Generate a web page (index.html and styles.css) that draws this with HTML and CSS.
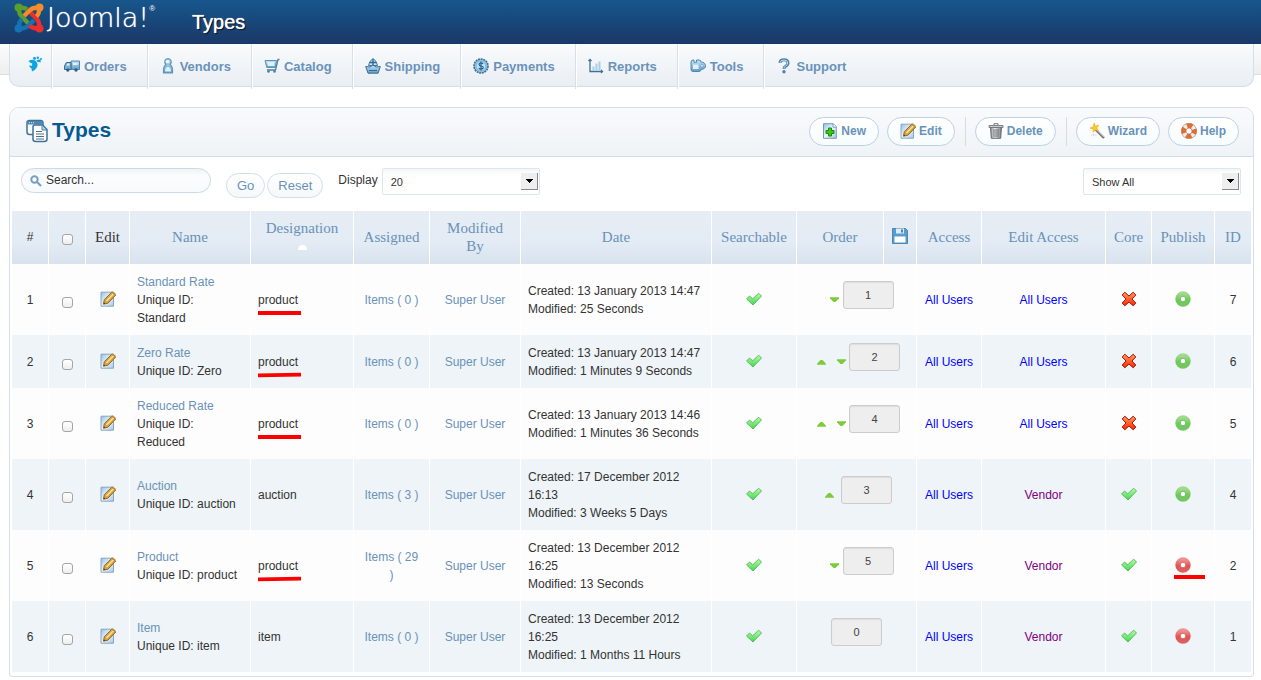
FILE: index.html
```html
<!DOCTYPE html>
<html lang="en">
<head>
<meta charset="utf-8">
<title>Types</title>
<link rel="stylesheet" href="styles.css">
</head>
<body>
<svg class="sprite" aria-hidden="true">
  <defs>
    <linearGradient id="g-blue" x1="0" y1="0" x2="0" y2="1"><stop offset="0" stop-color="#c5e4f5"/><stop offset="1" stop-color="#5f9cc5"/></linearGradient>
    <linearGradient id="g-check" x1="0" y1="0" x2="0" y2="1"><stop offset="0" stop-color="#b4ffa0"/><stop offset="1" stop-color="#42d653"/></linearGradient>
    <linearGradient id="g-cross" x1="0" y1="0" x2="0" y2="1"><stop offset="0" stop-color="#ff9a5c"/><stop offset="1" stop-color="#ff2600"/></linearGradient>
    <linearGradient id="g-on" x1="0" y1="0" x2="0" y2="1"><stop offset="0" stop-color="#a0d98f"/><stop offset=".6" stop-color="#6ccb55"/><stop offset="1" stop-color="#74c663"/></linearGradient>
    <linearGradient id="g-off" x1="0" y1="0" x2="0" y2="1"><stop offset="0" stop-color="#f09090"/><stop offset=".6" stop-color="#e45050"/><stop offset="1" stop-color="#de5f5f"/></linearGradient>
    <linearGradient id="g-page" x1="0" y1="0" x2="1" y2="1"><stop offset="0" stop-color="#8fc0ec"/><stop offset=".5" stop-color="#eef6ff"/><stop offset="1" stop-color="#a6c5e8"/></linearGradient>
    <linearGradient id="g-bin" x1="0" y1="0" x2="1" y2="0"><stop offset="0" stop-color="#8a8f94"/><stop offset=".4" stop-color="#eceeef"/><stop offset="1" stop-color="#777c82"/></linearGradient>
  </defs>
  <symbol id="i-joomla" viewBox="0 0 30 30">
    <g fill="none" stroke-width="4.400" stroke-linejoin="round">
      <path d="M5 5 Q4.500 10.500 8 14 L14.500 20.500" stroke="#5a9e2d"/>
      <path d="M5 25 Q4.500 19 8 15.800 M5 25 Q11 26 14.500 22.500 L20 17" stroke="#1472b5"/>
      <path d="M25 25 Q19 26 15.500 22.500 M25 25 Q26 19 22.500 15.500 L16 9" stroke="#ed2f2c"/>
      <path d="M25 5 Q25.500 10.500 22.500 13.500 M25 5 Q19 4 15.500 7.500 L10 13" stroke="#f68b28"/>
      <path d="M5 5 Q10 4 13.200 6.200" stroke="#5a9e2d"/>
    </g>
    <circle cx="4.500" cy="4.500" r="4" fill="#5a9e2d"/><circle cx="25.500" cy="4.500" r="4" fill="#f68b28"/>
    <circle cx="4.500" cy="25.500" r="4" fill="#1472b5"/><circle cx="25.500" cy="25.500" r="4" fill="#ed2f2c"/>
  </symbol>
  <symbol id="i-home" viewBox="0 0 16 16">
    <path fill="#0ca5e2" d="M1.500 5 Q5.500 2.500 8.800 5 Q12 8.500 9.500 12 Q8 14.500 5 15.500 L4.500 12.500 Q2.500 11.500 2 9.500 L5 9.700 L5.300 7.500 Q3 7 1.500 5Z M9.500 4.200 L13.500 3.200 L13.800 6.300 L10.500 6Z"/>
    <circle cx="7.500" cy="2.200" r="1.500" fill="#0ca5e2"/><circle cx="10.800" cy="1.700" r="1.200" fill="#0ca5e2"/><circle cx="14" cy="3" r="1" fill="#0ca5e2"/>
  </symbol>
  <symbol id="i-truck" viewBox="0 0 16 16">
    <path d="M7 3h8.500v8.500H7z" fill="url(#g-blue)" stroke="#5688ae"/><path d="M.5 11.500V8L2.300 4.500H7v7z" fill="#7fb0d2" stroke="#3a6f99"/>
    <path d="M2.500 7.500 3.300 5.500H5.500v2z" fill="#e3f3fb"/><path d="M9 5h4.500v2H9z" fill="#e3f3fb"/>
    <circle cx="3.800" cy="12" r="1.700" fill="#2f5f88"/><circle cx="12" cy="12" r="1.700" fill="#2f5f88"/>
  </symbol>
  <symbol id="i-vendor" viewBox="0 0 16 16">
    <path d="M8 .7a3.300 3.300 0 0 1 2.200 5.700Q12.500 8 12.500 11.500V15H3.500v-3.500Q3.500 8 5.800 6.400A3.300 3.300 0 0 1 8 .7z" fill="url(#g-blue)" stroke="#5f93b8" stroke-width="1.200"/>
    <ellipse cx="7.500" cy="3.500" rx="1.800" ry="1.600" fill="#eef8fd"/><path d="M5 13.500q0-4.500 3-4.500t3 4.500z" fill="#dceffa"/>
  </symbol>
  <symbol id="i-cart" viewBox="0 0 16 16">
    <path d="M1 2.500h11.500l-1.200 7H2.800z" fill="url(#g-blue)" stroke="#5f93b8"/><path d="M15.500 1.500H14L11.500 12H3" fill="none" stroke="#4b80a8" stroke-width="1.300"/>
    <path d="M3 4h7.500v4H3.800z" fill="#dceffa"/><circle cx="4.500" cy="13.500" r="1.300" fill="#4b80a8"/><circle cx="10.500" cy="13.500" r="1.300" fill="#4b80a8"/>
  </symbol>
  <symbol id="i-ship" viewBox="0 0 16 16">
    <path d="M8 .5Q12 3 12.500 7.500H3.500Q4 3 8 .5z" fill="#c6e4f3" stroke="#44779f"/><path d="M8 1v7M5 4.500h6" stroke="#2f658f" stroke-width="1.300"/>
    <path d="M.7 8.500 5 9l3-2 3 2 4.300-.5-2.200 6.700H3z" fill="url(#g-blue)" stroke="#3a6d96"/><path d="M4 12.500h8" stroke="#3a6d96"/>
  </symbol>
  <symbol id="i-coin" viewBox="0 0 16 16">
    <circle cx="8" cy="8" r="7" fill="#8fc4e3" stroke="#3d6f98" stroke-width="1.600" stroke-dasharray="2 .7"/><circle cx="8" cy="8" r="4.800" fill="#bce2f4" stroke="#74abcf" stroke-width=".7"/>
    <path d="M10.200 5.800Q8 4 6.300 5.600 5.500 7.500 8 8q2.800.6 2 2.300Q8 12 5.800 10.300M8 3.500v9" fill="none" stroke="#2c628c" stroke-width="1.200"/>
  </symbol>
  <symbol id="i-chart" viewBox="0 0 16 16">
    <path d="M2 1.500v12h12.500M.5 3 2 1.500 3.500 3m9.500 9 1.500 1.500-1.500 1.500" fill="none" stroke="#3f7298" stroke-width="1.300"/>
    <path d="M4.500 8.500h2v4h-2zM7.500 5.500h2v7h-2zM10.500 3.500h2v9h-2z" fill="#a9cfe7"/>
  </symbol>
  <symbol id="i-tools" viewBox="0 0 16 16">
    <path d="M1 4q0-2 2-2h1v2.200h2.500V2H9q2 0 2 2 4.500.5 4.500 3.800T11 11.500q0 2-2 2H3q-2 0-2-2z" fill="url(#g-blue)" stroke="#5288b0" stroke-linejoin="round"/><path d="M3 6.500h5.500v4.500H3z" fill="#dff1fa"/><circle cx="12" cy="7.800" r="1.300" fill="#fff" stroke="#5288b0" stroke-width=".6"/>
  </symbol>
  <symbol id="i-question" viewBox="0 0 16 16">
    <path d="M4 5Q4 1.700 8 1.700t4 3.300q0 2-2.500 3.300Q8 9 8 11" fill="none" stroke="#4d83ab" stroke-width="3"/><path d="M4 4.800Q4.300 2 8 2t3.700 3q0 1.700-2.200 3Q8 9 8 10.700" fill="none" stroke="#c0dded" stroke-width="1"/><circle cx="8" cy="13.800" r="1.700" fill="#4d83ab"/>
  </symbol>
  <symbol id="i-types" viewBox="0 0 22 24">
    <rect x="1" y="1.500" width="16" height="14" rx="2.500" fill="#fafcfd" stroke="#3d7299" stroke-width="1.500"/><path d="M1.500 2h15v3.500h-15z" fill="#4d86ae"/><path d="M3 3.700h5" stroke="#cfe8f5" stroke-dasharray="1 1"/>
    <path d="M9 6h7.500L21 10.500V20q0 2.500-2.500 2.500H9.500Q7 22.500 7 20V8q0-2 2-2z" fill="#fff" stroke="#3d7299" stroke-width="1.500"/><path d="M16 6v5h5z" fill="#a8d8ef" stroke="#4d86ae"/>
    <path d="M10 12.500h6M10 15h8M10 17.500h8M10 20h8" stroke="#4d6f8a" stroke-width="1.200"/>
  </symbol>
  <symbol id="i-search" viewBox="0 0 12 12"><circle cx="4.500" cy="4.500" r="3.200" fill="none" stroke="#769ec4" stroke-width="2"/><path d="m7 7 4 4" stroke="#769ec4" stroke-width="2.200"/></symbol>
  <symbol id="i-new" viewBox="0 0 16 16">
    <path d="M1.500.7h9.800l3 3v11.600H1.500z" fill="url(#g-page)" stroke="#7899b4"/><path d="M11 .7v3.500h3.300" fill="#fff" stroke="#7899b4"/>
    <path d="M6.500 5h3v2.500H12v3H9.500V13h-3v-2.500H4v-3h2.500z" fill="#3ec813" stroke="#168b08" stroke-linejoin="round"/>
  </symbol>
  <symbol id="i-edit" viewBox="0 0 16 16">
    <path d="M1 1.200h12.500v14H1z" fill="url(#g-page)" stroke="#8aa5bc"/>
    <path d="m3.500 13.200.8-4.500 7.400-7.500 4 2.800-7.800 8.200z" fill="#d9a441" stroke="#8c6728"/><path d="m6.500 10 7-7.200" stroke="#ffe29a" stroke-width="1.300"/><path d="m11.500 1.200 1-1 3.300 2.600-.6 1.400z" fill="#bd8b3d"/><path d="m3.500 13.200.5-1.800 1.200 1z" fill="#333"/>
  </symbol>
  <symbol id="i-bin" viewBox="0 0 16 16">
    <path d="M2.500 4h11l-.8 11.300H3.300z" fill="url(#g-bin)" stroke="#666b70"/><path d="M1 2.500h14v2H1z" fill="#c9cdd0" stroke="#666b70" stroke-width=".8"/><path d="M6 2V.7h4V2M6 6v8M8 6v8M10 6v8" fill="none" stroke="#62676c" stroke-width=".9"/>
  </symbol>
  <symbol id="i-wand" viewBox="0 0 16 16">
    <path d="m6 6 9 9" stroke="#6f6f70" stroke-width="2.400"/><path d="m6.500 5.800 8.500 8.500" stroke="#e0e0de" stroke-width=".9"/><path d="M2 12h6M4.500 10.500v3" stroke="#dcdfe0"/>
    <path d="M5.200 0 6.300 3 9.800 2.200 7.800 5 9.500 7.700 6.200 7 4.200 9.300 4 6.200 1 5 4.200 3.800z" fill="#ffc928" stroke="#e8a010" stroke-width=".5"/>
  </symbol>
  <symbol id="i-help" viewBox="0 0 16 16">
    <circle cx="8" cy="8" r="5.300" fill="none" stroke="#9a6850" stroke-width="5.200"/><circle cx="8" cy="8" r="5.300" fill="none" stroke="#f4eee9" stroke-width="4.200"/><circle cx="8" cy="8" r="5.300" fill="none" stroke="#e26b32" stroke-width="4.600" stroke-dasharray="5.325 3" stroke-dashoffset="2.660"/>
  </symbol>
  <symbol id="i-save" viewBox="0 0 16 16">
    <path d="M.5.500h13l2 2v13H.5z" fill="#5a9dcd" stroke="#4b86b5"/><path d="M4 .5h8v5H4z" fill="#dcecf6"/><path d="M9 1.500h2v3H9z" fill="#4b86b5"/><path d="M2.500 8.500h11v6h-11z" fill="#fff"/>
  </symbol>
  <symbol id="i-check" viewBox="0 0 16 16"><path d="m.6 8 2.900-3 3.200 2.800 6-5.600L15.500 5 7 14z" fill="url(#g-check)" stroke="#55b35a" stroke-width=".9" stroke-linejoin="round"/></symbol>
  <symbol id="i-cross" viewBox="0 0 16 16"><path d="M3.800 1.200 8 5l4.200-3.800L14.800 4 11 8l3.800 4-2.600 2.800L8 11l-4.200 3.800L1.200 12 5 8 1.200 4z" fill="url(#g-cross)" stroke="#a9160b" stroke-linejoin="round"/></symbol>
  <symbol id="i-on" viewBox="0 0 16 16"><circle cx="8" cy="8" r="5.200" fill="none" stroke="url(#g-on)" stroke-width="5"/><circle cx="8" cy="8" r="2.700" fill="#fff" stroke="#55a348" stroke-width=".7"/></symbol>
  <symbol id="i-off" viewBox="0 0 16 16"><circle cx="8" cy="8" r="5.200" fill="none" stroke="url(#g-off)" stroke-width="5"/><circle cx="8" cy="8" r="2.700" fill="#fff" stroke="#c04545" stroke-width=".7"/></symbol>
  <symbol id="i-up" viewBox="0 0 9 6"><path d="M0 5.800V4.800L3.500 1h2L9 4.800v1z" fill="#7ccb3a"/></symbol>
  <symbol id="i-down" viewBox="0 0 9 6"><path d="M0 .2v1L3.500 5h2L9 1.200v-1z" fill="#7ccb3a"/></symbol>
</svg>

<header class="topbar">
  <a class="brand" href="#"><svg class="brand-mark" aria-hidden="true"><use href="#i-joomla"/></svg><span class="brand-name">Joomla!</span><sup class="brand-reg">®</sup></a>
  <span class="topbar-title">Types</span>
</header>

<div class="nav-strip">
  <nav class="nav">
    <a class="nav-item nav-home" href="#" aria-label="Home"><svg class="icon"><use href="#i-home"/></svg></a>
    <a class="nav-item" href="#"><svg class="icon"><use href="#i-truck"/></svg>Orders</a>
    <a class="nav-item" href="#"><svg class="icon"><use href="#i-vendor"/></svg>Vendors</a>
    <a class="nav-item" href="#"><svg class="icon"><use href="#i-cart"/></svg>Catalog</a>
    <a class="nav-item" href="#"><svg class="icon"><use href="#i-ship"/></svg>Shipping</a>
    <a class="nav-item" href="#"><svg class="icon"><use href="#i-coin"/></svg>Payments</a>
    <a class="nav-item" href="#"><svg class="icon"><use href="#i-chart"/></svg>Reports</a>
    <a class="nav-item" href="#"><svg class="icon"><use href="#i-tools"/></svg>Tools</a>
    <a class="nav-item" href="#"><svg class="icon"><use href="#i-question"/></svg>Support</a>
  </nav>
</div>

<main class="panel">
  <div class="panel-head">
    <svg class="panel-icon" aria-hidden="true"><use href="#i-types"/></svg>
    <h1 class="panel-title">Types</h1>
    <div class="toolbar">
      <button class="tool" type="button"><svg class="icon"><use href="#i-new"/></svg>New</button>
      <button class="tool" type="button"><svg class="icon"><use href="#i-edit"/></svg>Edit</button>
      <span class="tool-sep"></span>
      <button class="tool" type="button"><svg class="icon"><use href="#i-bin"/></svg>Delete</button>
      <span class="tool-sep"></span>
      <button class="tool" type="button"><svg class="icon"><use href="#i-wand"/></svg>Wizard</button>
      <button class="tool" type="button"><svg class="icon"><use href="#i-help"/></svg>Help</button>
    </div>
  </div>

  <form class="filters">
    <div class="search"><svg class="search-icon" aria-hidden="true"><use href="#i-search"/></svg><input class="search-input" type="text" aria-label="Search" value="Search..."></div>
    <div class="filter-buttons"><button class="pill" type="button">Go</button><button class="pill" type="button">Reset</button></div>
    <label class="display-label" for="display">Display</label>
    <span class="select"><select class="select-box" id="display"><option>20</option></select></span>
    <span class="select select-end"><select class="select-box" aria-label="Show"><option>Show All</option></select></span>
  </form>

  <table class="grid">
    <colgroup><col class="w37"><col class="w37"><col class="w44"><col class="w121"><col class="w103"><col class="w76"><col class="w91"><col class="w191"><col class="w85"><col class="w87"><col class="w33"><col class="w65"><col class="w124"><col class="w46"><col class="w63"><col class="w37"></colgroup>
    <thead>
      <tr>
        <th class="num">#</th>
        <th><input class="check" type="checkbox" aria-label="Select all"></th>
        <th class="plain">Edit</th>
        <th><a href="#">Name</a></th>
        <th><a href="#">Designation<span class="sort"></span></a></th>
        <th><a href="#">Assigned</a></th>
        <th><a href="#">Modified<br>By</a></th>
        <th><a href="#">Date</a></th>
        <th><a href="#">Searchable</a></th>
        <th><a href="#">Order</a></th>
        <th><a href="#" aria-label="Save order"><svg class="icon"><use href="#i-save"/></svg></a></th>
        <th><a href="#">Access</a></th>
        <th><a href="#">Edit Access</a></th>
        <th><a href="#">Core</a></th>
        <th><a href="#">Publish</a></th>
        <th><a href="#">ID</a></th>
      </tr>
    </thead>
    <tbody>
      <tr>
        <td>1</td>
        <td><input class="check" type="checkbox" aria-label="Select row 1"></td>
        <td><a href="#" aria-label="Edit"><svg class="icon"><use href="#i-edit"/></svg></a></td>
        <td class="left"><a href="#">Standard Rate</a><br>Unique ID:<br>Standard</td>
        <td class="left"><span class="marked">product</span></td>
        <td><a href="#">Items ( 0 )</a></td>
        <td><a href="#">Super User</a></td>
        <td class="left">Created: 13 January 2013 14:47<br>Modified: 25 Seconds</td>
        <td><svg class="icon"><use href="#i-check"/></svg></td>
        <td class="order" colspan="2"><div class="order-row"><a class="move down lone" href="#" aria-label="Move down"><svg class="arrow"><use href="#i-down"/></svg></a><input class="order-input" type="text" aria-label="Order" value="1"></div></td>
        <td><a class="all" href="#">All Users</a></td>
        <td><a class="all" href="#">All Users</a></td>
        <td><svg class="icon"><use href="#i-cross"/></svg></td>
        <td><svg class="icon"><use href="#i-on"/></svg></td>
        <td>7</td>
      </tr>
      <tr>
        <td>2</td>
        <td><input class="check" type="checkbox" aria-label="Select row 2"></td>
        <td><a href="#" aria-label="Edit"><svg class="icon"><use href="#i-edit"/></svg></a></td>
        <td class="left"><a href="#">Zero Rate</a><br>Unique ID: Zero</td>
        <td class="left"><span class="marked tilt">product</span></td>
        <td><a href="#">Items ( 0 )</a></td>
        <td><a href="#">Super User</a></td>
        <td class="left">Created: 13 January 2013 14:47<br>Modified: 1 Minutes 9 Seconds</td>
        <td><svg class="icon"><use href="#i-check"/></svg></td>
        <td class="order" colspan="2"><div class="order-row"><a class="move up" href="#" aria-label="Move up"><svg class="arrow"><use href="#i-up"/></svg></a><a class="move down" href="#" aria-label="Move down"><svg class="arrow"><use href="#i-down"/></svg></a><input class="order-input" type="text" aria-label="Order" value="2"></div></td>
        <td><a class="all" href="#">All Users</a></td>
        <td><a class="all" href="#">All Users</a></td>
        <td><svg class="icon"><use href="#i-cross"/></svg></td>
        <td><svg class="icon"><use href="#i-on"/></svg></td>
        <td>6</td>
      </tr>
      <tr>
        <td>3</td>
        <td><input class="check" type="checkbox" aria-label="Select row 3"></td>
        <td><a href="#" aria-label="Edit"><svg class="icon"><use href="#i-edit"/></svg></a></td>
        <td class="left"><a href="#">Reduced Rate</a><br>Unique ID:<br>Reduced</td>
        <td class="left"><span class="marked">product</span></td>
        <td><a href="#">Items ( 0 )</a></td>
        <td><a href="#">Super User</a></td>
        <td class="left">Created: 13 January 2013 14:46<br>Modified: 1 Minutes 36 Seconds</td>
        <td><svg class="icon"><use href="#i-check"/></svg></td>
        <td class="order" colspan="2"><div class="order-row"><a class="move up" href="#" aria-label="Move up"><svg class="arrow"><use href="#i-up"/></svg></a><a class="move down" href="#" aria-label="Move down"><svg class="arrow"><use href="#i-down"/></svg></a><input class="order-input" type="text" aria-label="Order" value="4"></div></td>
        <td><a class="all" href="#">All Users</a></td>
        <td><a class="all" href="#">All Users</a></td>
        <td><svg class="icon"><use href="#i-cross"/></svg></td>
        <td><svg class="icon"><use href="#i-on"/></svg></td>
        <td>5</td>
      </tr>
      <tr>
        <td>4</td>
        <td><input class="check" type="checkbox" aria-label="Select row 4"></td>
        <td><a href="#" aria-label="Edit"><svg class="icon"><use href="#i-edit"/></svg></a></td>
        <td class="left"><a href="#">Auction</a><br>Unique ID: auction</td>
        <td class="left">auction</td>
        <td><a href="#">Items ( 3 )</a></td>
        <td><a href="#">Super User</a></td>
        <td class="left">Created: 17 December 2012<br>16:13<br>Modified: 3 Weeks 5 Days</td>
        <td><svg class="icon"><use href="#i-check"/></svg></td>
        <td class="order" colspan="2"><div class="order-row"><a class="move up" href="#" aria-label="Move up"><svg class="arrow"><use href="#i-up"/></svg></a><input class="order-input" type="text" aria-label="Order" value="3"></div></td>
        <td><a class="all" href="#">All Users</a></td>
        <td><a class="vendor" href="#">Vendor</a></td>
        <td><svg class="icon"><use href="#i-check"/></svg></td>
        <td><svg class="icon"><use href="#i-on"/></svg></td>
        <td>4</td>
      </tr>
      <tr>
        <td>5</td>
        <td><input class="check" type="checkbox" aria-label="Select row 5"></td>
        <td><a href="#" aria-label="Edit"><svg class="icon"><use href="#i-edit"/></svg></a></td>
        <td class="left"><a href="#">Product</a><br>Unique ID: product</td>
        <td class="left"><span class="marked tilt">product</span></td>
        <td><a href="#">Items ( 29<br>)</a></td>
        <td><a href="#">Super User</a></td>
        <td class="left">Created: 13 December 2012<br>16:25<br>Modified: 13 Seconds</td>
        <td><svg class="icon"><use href="#i-check"/></svg></td>
        <td class="order" colspan="2"><div class="order-row"><a class="move down lone" href="#" aria-label="Move down"><svg class="arrow"><use href="#i-down"/></svg></a><input class="order-input" type="text" aria-label="Order" value="5"></div></td>
        <td><a class="all" href="#">All Users</a></td>
        <td><a class="vendor" href="#">Vendor</a></td>
        <td><svg class="icon"><use href="#i-check"/></svg></td>
        <td><span class="marked marked-icon"><svg class="icon"><use href="#i-off"/></svg></span></td>
        <td>2</td>
      </tr>
      <tr>
        <td>6</td>
        <td><input class="check" type="checkbox" aria-label="Select row 6"></td>
        <td><a href="#" aria-label="Edit"><svg class="icon"><use href="#i-edit"/></svg></a></td>
        <td class="left"><a href="#">Item</a><br>Unique ID: item</td>
        <td class="left">item</td>
        <td><a href="#">Items ( 0 )</a></td>
        <td><a href="#">Super User</a></td>
        <td class="left">Created: 13 December 2012<br>16:25<br>Modified: 1 Months 11 Hours</td>
        <td><svg class="icon"><use href="#i-check"/></svg></td>
        <td class="order" colspan="2"><div class="order-row"><input class="order-input" type="text" aria-label="Order" value="0"></div></td>
        <td><a class="all" href="#">All Users</a></td>
        <td><a class="vendor" href="#">Vendor</a></td>
        <td><svg class="icon"><use href="#i-check"/></svg></td>
        <td><svg class="icon"><use href="#i-off"/></svg></td>
        <td>1</td>
      </tr>
    </tbody>
  </table>
</main>
</body>
</html>
```

FILE: styles.css
```css
* { box-sizing: border-box; }
body {
  margin: 0;
  background: #fff;
  color: #333;
  font: 12px/18px "Liberation Sans", Arial, sans-serif;
}
a { color: #6a92b9; text-decoration: none; }
button, input, select { font-family: inherit; margin: 0; }
.sprite { position: absolute; width: 0; height: 0; }
.icon { width: 16px; height: 16px; display: block; flex: none; }

/* Top bar */
.topbar {
  height: 44px;
  display: flex;
  align-items: center;
  padding: 0 14px;
  background: linear-gradient(#17568c, #1a3867);
  color: #fff;
}
.brand { display: flex; align-items: flex-start; width: 178px; height: 38px; color: #fff; }
.brand-mark { width: 30px; height: 30px; flex: none; }
.brand-name {
  margin-left: 3px;
  font: 200 27px/30px "DejaVu Sans", sans-serif;
  text-shadow: 0 0 1px #fff;
}
.brand-reg { font-size: 8px; line-height: 12px; }
.topbar-title { font-size: 20px; line-height: 24px; text-shadow: 0 0 1px #fff, 1px 1px 1px #000; }

/* Navigation */
.nav-strip {
  height: 31px;
  padding: 0 7px 0 9px;
  background: linear-gradient(#fcfcfc, #eee);
  border-bottom: 1px solid #ddd;
}
.nav {
  display: flex;
  height: 43px;
  background: linear-gradient(#f9fbfc, #e9eef4);
  border: 1px solid #d3dfea;
  border-top: 0;
  border-radius: 0 0 10px 10px;
}
.nav-item {
  display: flex;
  align-items: center;
  gap: 4px;
  height: 45px;
  padding: 1px 20px 0 12px;
  border-left: 1px solid #d7e0e9;
  box-shadow: inset 1px 0 #fff;
  font-size: 13px;
  font-weight: bold;
}
.nav-home { border-left: 0; box-shadow: none; padding: 0 8px 3px 17px; }
.nav-item .icon { margin-bottom: 2px; }

/* Panel */
.panel {
  margin: 32px 7px 0 9px;
  border: 1px solid #d5deea;
  border-radius: 10px 10px 3px 3px;
  padding-bottom: 4px;
}
.panel-head {
  display: flex;
  align-items: center;
  height: 49px;
  padding: 0 14px 2px 16px;
  background: linear-gradient(#f9fafc, #eff3f7);
  border-bottom: 1px solid #d3dbe8;
  border-radius: 9px 9px 0 0;
}
.panel-icon { width: 22px; height: 24px; flex: none; }
.panel-title { margin: 0 0 2px 4px; color: #065a91; font-size: 21px; line-height: 24px; }
.toolbar { display: flex; align-items: center; gap: 8px; margin-left: auto; }
.tool {
  display: flex;
  align-items: center;
  gap: 3px;
  height: 29px;
  padding: 0 12px;
  border: 1px solid #bfd0e3;
  border-radius: 15px;
  background: linear-gradient(#fff, #f6fcfd);
  color: #6a92b9;
  font-size: 12px;
  font-weight: bold;
}
.tool-sep { width: 1px; height: 29px; margin: 0 1px 0 2px; background: #d3dce7; }

/* Filters */
.filters { display: flex; align-items: flex-start; padding: 11px 12px 13px 11px; }
.search {
  display: flex;
  align-items: center;
  width: 190px;
  height: 25px;
  padding: 0 8px;
  border: 1px solid #ccd9e7;
  border-radius: 13px;
  background: linear-gradient(#eff4f7, #fbfdfe 30%, #f7fafb);
}
.search-icon { width: 12px; height: 12px; flex: none; margin-right: 4px; }
.search-input { width: 100%; min-width: 0; padding: 0 0 1px; border: 0; outline: 0; background: none; color: #333; font-size: 12px; }
.filter-buttons { display: flex; gap: 2px; margin: 5px 15px 0 15px; }
.pill {
  height: 25px;
  padding: 0 10px;
  border: 1px solid #d3dee9;
  border-radius: 13px;
  background: linear-gradient(#fff, #f5f8fa);
  color: #6a92b9;
  font-size: 13px;
}
.display-label { margin: 3px 4px 0 0; }
.select { position: relative; width: 158px; height: 27px; }
.select::after {
  content: "";
  position: absolute;
  top: 5px;
  right: 2px;
  width: 16px;
  height: 16px;
  border: solid #8a8a8a;
  border-width: 0 1px 1px 0;
  background: linear-gradient(#000, #000) 5px 6px/7px 1px no-repeat, linear-gradient(#000, #000) 6px 7px/5px 1px no-repeat, linear-gradient(#000, #000) 7px 8px/3px 1px no-repeat, linear-gradient(#000, #000) 8px 9px/1px 1px no-repeat, #eee;
  pointer-events: none;
}
.select-box {
  width: 100%;
  height: 27px;
  padding: 0 8px;
  border: 1px solid #dde5ee;
  border-radius: 2px;
  appearance: none;
  background: linear-gradient(#f3f6f9, #fff 25%);
  color: #333;
  font-size: 11px;
}
.select-end { margin-left: auto; }

/* Data table */
.grid {
  width: calc(100% - 3px);
  margin: 0 1px 0 2px;
  table-layout: fixed;
  border-collapse: separate;
  border-spacing: 0;
}
.w33 { width: 33px; } .w37 { width: 37px; } .w44 { width: 44px; } .w46 { width: 46px; }
.w63 { width: 63px; } .w65 { width: 65px; } .w76 { width: 76px; } .w85 { width: 85px; }
.w87 { width: 87px; } .w91 { width: 91px; } .w103 { width: 103px; } .w121 { width: 121px; }
.w124 { width: 124px; } .w191 { width: 191px; }
.grid th {
  height: 53px;
  padding: 0 0 2px;
  border-right: 1px solid #fff;
  background: linear-gradient(#e6edf5, #e3ebf4 60%, #d8e3ee);
  font: 15px/18px "Liberation Serif", serif;
}
.grid th.num { font: 12px/18px "Liberation Sans", Arial, sans-serif; }
.grid .icon { margin: 0 auto 2px; }
.sort {
  display: block;
  width: 9px;
  height: 5px;
  margin: 8px auto 5px;
  border-radius: 5px 5px 0 0;
  background: #fff;
}
.grid td {
  padding: 9px 7px 8px;
  border-right: 1px solid #fff;
  background: #fdfdfd;
  text-align: center;
  vertical-align: middle;
}
.grid tbody tr:nth-child(even) td { background: #eef4f7; }
.grid td.left { text-align: left; white-space: nowrap; }
.grid td a.all { color: #00f; }
.grid td a.vendor { color: #800080; }
.grid td.order { padding: 0; }
.check {
  appearance: none;
  display: block;
  width: 11px;
  height: 11px;
  margin: 5px auto 0;
  border: 1px solid #a5a5a5;
  border-radius: 3px;
  background: linear-gradient(#fff, #eee);
}
.order-row { display: flex; justify-content: center; align-items: center; }
.move { display: flex; width: 16px; padding-left: 4px; }
.up { width: 20px; }
.lone { width: 23px; padding-left: 10px; }
.arrow { width: 9px; height: 6px; }
.order-input {
  width: 51px;
  height: 28px;
  margin-bottom: 10px;
  padding: 0;
  border: 1px solid #ccc;
  border-radius: 3px;
  background: #eee;
  box-shadow: inset 0 1px 1px #ddd;
  color: #444;
  font-size: 11px;
  text-align: center;
}

/* Red annotation strokes */
.marked { position: relative; display: inline-block; }
.marked::after {
  content: "";
  position: absolute;
  left: 0;
  bottom: -6px;
  width: 43px;
  height: 4px;
  background: #f00;
}
.tilt::after { transform: rotate(-1deg); }
.marked-icon { display: block; width: 16px; margin: 0 auto; }
.marked-icon::after { left: -1px; width: 31px; }
```
